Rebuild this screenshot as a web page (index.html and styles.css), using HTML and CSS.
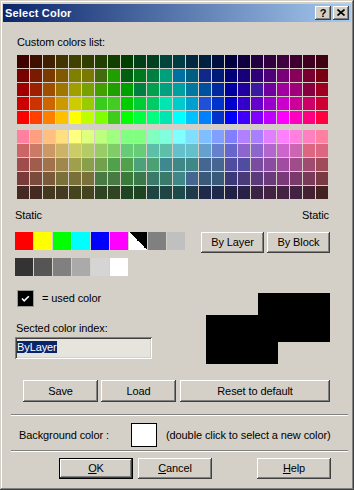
FILE: index.html
```html
<!DOCTYPE html>
<html>
<head>
<meta charset="utf-8">
<link rel="stylesheet" href="styles.css">
</head>
<body>
<div class="window">
  <div class="titlebar">
    <span class="title">Select Color</span>
    <span class="tb-btn q">?</span>
    <span class="tb-btn x"><svg width="8" height="7" viewBox="0 0 8 7"><path d="M0.5 0.5 L7.5 6.5 M7.5 0.5 L0.5 6.5" stroke="#000" stroke-width="1.6" fill="none"/></svg></span>
  </div>
  <div class="content">
    <div class="label custom">Custom colors list:</div>
    <div class="grid g1">
      <i style="background:#3f0000"></i><i style="background:#3f1000"></i><i style="background:#3f2000"></i><i style="background:#423400"></i><i style="background:#404000"></i><i style="background:#303f00"></i><i style="background:#203f00"></i><i style="background:#103f00"></i><i style="background:#003f00"></i><i style="background:#003f18"></i><i style="background:#003f20"></i><i style="background:#00443c"></i><i style="background:#003c44"></i><i style="background:#00283f"></i><i style="background:#00203f"></i><i style="background:#00103f"></i><i style="background:#00003f"></i><i style="background:#10003f"></i><i style="background:#20003f"></i><i style="background:#30003f"></i><i style="background:#3f003f"></i><i style="background:#3f0030"></i><i style="background:#3f0020"></i><i style="background:#3f0010"></i>
      <i style="background:#780000"></i><i style="background:#7a1a00"></i><i style="background:#7a3a00"></i><i style="background:#7f5a00"></i><i style="background:#7f7f00"></i><i style="background:#7a7a00"></i><i style="background:#446a10"></i><i style="background:#20a000"></i><i style="background:#006010"></i><i style="background:#00781e"></i><i style="background:#008040"></i><i style="background:#00a07c"></i><i style="background:#0070a0"></i><i style="background:#005f80"></i><i style="background:#10288a"></i><i style="background:#001a7a"></i><i style="background:#000078"></i><i style="background:#180078"></i><i style="background:#300078"></i><i style="background:#500078"></i><i style="background:#780078"></i><i style="background:#880058"></i><i style="background:#780030"></i><i style="background:#780010"></i>
      <i style="background:#a00000"></i><i style="background:#9f2000"></i><i style="background:#9f4f00"></i><i style="background:#9f7700"></i><i style="background:#9f9f00"></i><i style="background:#77a000"></i><i style="background:#44a000"></i><i style="background:#20a000"></i><i style="background:#00a000"></i><i style="background:#008040"></i><i style="background:#00a04f"></i><i style="background:#00a080"></i><i style="background:#00a0a0"></i><i style="background:#0078a0"></i><i style="background:#0050a0"></i><i style="background:#0028a0"></i><i style="background:#0000a0"></i><i style="background:#2000a0"></i><i style="background:#3a1aa0"></i><i style="background:#7000a0"></i><i style="background:#a000a0"></i><i style="background:#a0007a"></i><i style="background:#880040"></i><i style="background:#a00020"></i>
      <i style="background:#cc0000"></i><i style="background:#cc3300"></i><i style="background:#cc6600"></i><i style="background:#cc9900"></i><i style="background:#cccc00"></i><i style="background:#99cc00"></i><i style="background:#3acc1a"></i><i style="background:#44cc22"></i><i style="background:#00cc00"></i><i style="background:#00cc33"></i><i style="background:#00cc66"></i><i style="background:#00e6b3"></i><i style="background:#00cccc"></i><i style="background:#009fd0"></i><i style="background:#2050d8"></i><i style="background:#0033cc"></i><i style="background:#0000cc"></i><i style="background:#3300cc"></i><i style="background:#6600cc"></i><i style="background:#9900cc"></i><i style="background:#cc00cc"></i><i style="background:#cc0099"></i><i style="background:#cc0066"></i><i style="background:#cc0033"></i>
      <i style="background:#ff0000"></i><i style="background:#ff4000"></i><i style="background:#ff8000"></i><i style="background:#ffc000"></i><i style="background:#ffff00"></i><i style="background:#c0ff00"></i><i style="background:#80ff00"></i><i style="background:#40cc1a"></i><i style="background:#00ff00"></i><i style="background:#00ff40"></i><i style="background:#00ff80"></i><i style="background:#00e6b3"></i><i style="background:#00ffff"></i><i style="background:#00c0ff"></i><i style="background:#0080ff"></i><i style="background:#0033cc"></i><i style="background:#0000ff"></i><i style="background:#4000ff"></i><i style="background:#8000ff"></i><i style="background:#c000ff"></i><i style="background:#ff00ff"></i><i style="background:#ff00c0"></i><i style="background:#ff0080"></i><i style="background:#ff0040"></i>
    </div>
    <div class="grid g2">
      <i style="background:#ff80a0"></i><i style="background:#ff9f80"></i><i style="background:#ffbf80"></i><i style="background:#ffdf80"></i><i style="background:#ffff80"></i><i style="background:#dfff80"></i><i style="background:#bfff80"></i><i style="background:#9fff80"></i><i style="background:#80ff80"></i><i style="background:#80ff80"></i><i style="background:#80ffbf"></i><i style="background:#80ffdf"></i><i style="background:#80ffff"></i><i style="background:#80dfff"></i><i style="background:#80bfff"></i><i style="background:#809fff"></i><i style="background:#8080ff"></i><i style="background:#b080ff"></i><i style="background:#a880ff"></i><i style="background:#e080ff"></i><i style="background:#ff80ff"></i><i style="background:#ff80df"></i><i style="background:#ff80c0"></i><i style="background:#ff80a0"></i>
      <i style="background:#cc6666"></i><i style="background:#cc7a66"></i><i style="background:#cc9966"></i><i style="background:#ccb366"></i><i style="background:#cccc66"></i><i style="background:#b3cc66"></i><i style="background:#99cc66"></i><i style="background:#80cc66"></i><i style="background:#66cc77"></i><i style="background:#66cc77"></i><i style="background:#5ebfa8"></i><i style="background:#5ebfa8"></i><i style="background:#66c0cc"></i><i style="background:#66c0cc"></i><i style="background:#66a0cc"></i><i style="background:#6680cc"></i><i style="background:#6666cc"></i><i style="background:#8c66cc"></i><i style="background:#8c66cc"></i><i style="background:#b366cc"></i><i style="background:#cc66cc"></i><i style="background:#cc66b3"></i><i style="background:#dd6680"></i><i style="background:#dd6680"></i>
      <i style="background:#a04c4c"></i><i style="background:#a05c4c"></i><i style="background:#a0734c"></i><i style="background:#a0884c"></i><i style="background:#a0a04c"></i><i style="background:#88a04c"></i><i style="background:#73a04c"></i><i style="background:#50a04c"></i><i style="background:#50a04c"></i><i style="background:#4ca07a"></i><i style="background:#4ca073"></i><i style="background:#408890"></i><i style="background:#408888"></i><i style="background:#408888"></i><i style="background:#446690"></i><i style="background:#446690"></i><i style="background:#504ca0"></i><i style="background:#504ca0"></i><i style="background:#7a4ca0"></i><i style="background:#8a4ca0"></i><i style="background:#a04ca0"></i><i style="background:#a04c88"></i><i style="background:#a04c70"></i><i style="background:#a04c58"></i>
      <i style="background:#7a3a3a"></i><i style="background:#7a4a3a"></i><i style="background:#7a5a3a"></i><i style="background:#7a703a"></i><i style="background:#7a703a"></i><i style="background:#7a703a"></i><i style="background:#4a7a44"></i><i style="background:#4a7a44"></i><i style="background:#3a7a3a"></i><i style="background:#3a7a4a"></i><i style="background:#3a7a6a"></i><i style="background:#3a7a6a"></i><i style="background:#408888"></i><i style="background:#446690"></i><i style="background:#3a5a7a"></i><i style="background:#3a5a7a"></i><i style="background:#3a3a7a"></i><i style="background:#4a3a7a"></i><i style="background:#5a3a7a"></i><i style="background:#6a3a7a"></i><i style="background:#7a3a7a"></i><i style="background:#7a3a6a"></i><i style="background:#7a3a5a"></i><i style="background:#7a3a44"></i>
      <i style="background:#442a22"></i><i style="background:#442a20"></i><i style="background:#443820"></i><i style="background:#443a22"></i><i style="background:#44441f"></i><i style="background:#44441f"></i><i style="background:#2e4422"></i><i style="background:#2e4422"></i><i style="background:#1f4422"></i><i style="background:#1f4422"></i><i style="background:#1f4444"></i><i style="background:#1f4444"></i><i style="background:#1f4a4a"></i><i style="background:#1f3a4a"></i><i style="background:#1f2a4a"></i><i style="background:#1f2a4a"></i><i style="background:#222244"></i><i style="background:#2a2244"></i><i style="background:#3a2244"></i><i style="background:#442244"></i><i style="background:#442244"></i><i style="background:#442244"></i><i style="background:#442233"></i><i style="background:#442222"></i>
    </div>
    <div class="static-labels"><span>Static</span><span>Static</span></div>
    <div class="static-row">
      <div class="swatches">
        <div class="sw-row">
          <i class="sw" style="background:#ff0000"></i><i class="sw" style="background:#ffff00"></i><i class="sw" style="background:#00ff00"></i><i class="sw" style="background:#00ffff"></i><i class="sw" style="background:#0000ff"></i><i class="sw" style="background:#ff00ff"></i><i class="sw diag"></i><i class="sw" style="background:#808080"></i><i class="sw" style="background:#c0c0c0"></i>
        </div>
        <div class="sw-row">
          <i class="sw" style="background:#333333"></i><i class="sw" style="background:#555555"></i><i class="sw" style="background:#808080"></i><i class="sw" style="background:#aaaaaa"></i><i class="sw" style="background:#d5d5d5"></i><i class="sw" style="background:#ffffff"></i>
        </div>
      </div>
      <div class="by-buttons">
        <div class="btn by">By Layer</div>
        <div class="btn by">By Block</div>
      </div>
    </div>
    <div class="lower">
      <div class="lower-left">
        <div class="used">
          <span class="check"><svg width="15" height="15" viewBox="0 0 15 15"><path d="M4 7.5 L6.2 9.8 L10.8 5.2" stroke="#fff" stroke-width="1.6" fill="none"/></svg></span>
          <span>= used color</span>
        </div>
        <div class="label index-label">Sected color index:</div>
        <div class="input"><span class="sel">ByLayer</span></div>
      </div>
      <div class="preview">
        <div class="pv pv-a"></div>
        <div class="pv pv-b"></div>
      </div>
    </div>
    <div class="btn-row">
      <div class="btn save">Save</div>
      <div class="btn load">Load</div>
      <div class="btn reset">Reset to default</div>
    </div>
    <div class="sep sep1"></div>
    <div class="bg-row">
      <span class="bg-label">Background color :</span>
      <span class="bg-box"></span>
      <span class="bg-hint">(double click to select a new color)</span>
    </div>
    <div class="sep sep2"></div>
    <div class="footer">
      <div class="btn fbtn default"><span><u>O</u>K</span></div>
      <div class="btn fbtn cancel"><span><u>C</u>ancel</span></div>
      <div class="btn fbtn help"><span><u>H</u>elp</span></div>
    </div>
  </div>
</div>
</body>
</html>
```
FILE: styles.css
```css
* { box-sizing: border-box; }
html, body { margin: 0; padding: 0; }
body {
  width: 354px;
  height: 490px;
  background: #d4d0c8;
  font-family: "Liberation Sans", Arial, sans-serif;
  font-size: 11px;
  line-height: 13px;
  letter-spacing: -0.1px;
  color: #000;
}
.window {
  width: 354px;
  height: 490px;
  background: #d4d0c8;
  padding: 4px 3px 3px 3px;
  box-shadow: inset -1px -1px #404040, inset 1px 1px #d4d0c8, inset -2px -2px #808080, inset 2px 2px #ffffff;
}
.titlebar {
  height: 18px;
  display: flex;
  align-items: center;
  padding: 0 2px 0 2px;
  background: linear-gradient(to right, #0a246a, #a6caf0);
}
.title {
  flex: 1;
  color: #fff;
  font-weight: bold;
  font-size: 11px;
  letter-spacing: 0.2px;
}
.tb-btn {
  width: 16px;
  height: 14px;
  background: #d4d0c8;
  box-shadow: inset -1px -1px #404040, inset 1px 1px #ffffff, inset -2px -2px #808080, inset 2px 2px #d4d0c8;
  display: flex;
  align-items: center;
  justify-content: center;
  font-weight: bold;
  font-size: 11px;
  line-height: 12px;
}
.tb-btn.x { margin-left: 2px; padding-bottom: 1px; }
.tb-btn svg { display: block; }

.content { display: flex; flex-direction: column; }
.label.custom { margin: 14px 0 0 14px; }
.grid {
  display: grid;
  grid-template-columns: repeat(24, 12px);
  grid-auto-rows: 13px;
  gap: 1px;
  margin: 6px 0 0 14px;
}
.grid i { display: block; }

.static-labels {
  display: flex;
  justify-content: space-between;
  margin: 10px 22px 0 12px;
}
.static-row {
  display: flex;
  justify-content: space-between;
  align-items: flex-start;
  margin: 10px 21px 0 12px;
}
.sw-row { display: flex; gap: 1px; }
.sw-row + .sw-row { margin-top: 8px; }
.sw { display: block; width: 18px; height: 18px; }
.sw.diag { background: linear-gradient(45deg, #ffffff 50%, #000000 50%); }
.by-buttons { display: flex; gap: 3px; }
.btn {
  background: #d4d0c8;
  box-shadow: inset -1px -1px #404040, inset 1px 1px #ffffff, inset -2px -2px #808080, inset 2px 2px #d4d0c8;
  display: flex;
  align-items: center;
  justify-content: center;
  white-space: nowrap;
}
.btn.by { width: 63px; height: 21px; }

.lower {
  display: flex;
  margin-top: 15px;
}
.lower-left { margin-left: 12px; }
.used {
  display: flex;
  align-items: center;
  height: 15px;
  margin-left: 3px;
}
.check {
  width: 15px;
  height: 15px;
  background: #000;
  margin-right: 9px;
  box-shadow: 0 0 0 1px #9a9890;
}
.check svg { display: block; }
.index-label { margin: 16px 0 0 1px; }
.input {
  width: 137px;
  height: 22px;
  margin-top: 2px;
  background: #e6e5dd;
  box-shadow: inset 1px 1px #808080, inset -1px -1px #ffffff, inset 2px 2px #404040, inset -2px -2px #d4d0c8;
  padding: 4px 0 0 2px;
}
.sel {
  display: inline-block;
  background: #0a246a;
  color: #fff;
  line-height: 12px;
  height: 12px;
}
.preview {
  position: relative;
  width: 124px;
  height: 73px;
  margin-left: auto;
  margin-right: 21px;
}
.pv { position: absolute; width: 72px; height: 49px; background: #000; }
.pv-a { left: 52px; top: 2px; }
.pv-b { left: 0; top: 24px; }

.btn-row {
  display: flex;
  margin: 16px 0 0 20px;
}
.btn-row .btn { height: 22px; }
.btn.save { width: 75px; }
.btn.load { width: 75px; margin-left: 3px; }
.btn.reset { width: 150px; margin-left: 4px; }

.sep {
  height: 2px;
  border-top: 1px solid #808080;
  border-bottom: 1px solid #ffffff;
  margin: 0 3px 0 8px;
}
.sep1 { margin-top: 12px; }
.sep2 { margin-top: 3px; }
.bg-row {
  display: flex;
  align-items: center;
  height: 24px;
  margin-top: 7px;
}
.bg-label { width: 128px; padding-left: 16px; }
.bg-box {
  width: 26px;
  height: 24px;
  background: #fff;
  border: 1px solid #000;
}
.bg-hint { margin-left: 9px; }

.footer {
  display: flex;
  margin: 6px 0 0 56px;
}
.fbtn { width: 74px; height: 21px; }
.fbtn.default { border: 1px solid #000; }
.fbtn.cancel { margin-left: 5px; }
.fbtn.help { margin-left: 45px; }
```
